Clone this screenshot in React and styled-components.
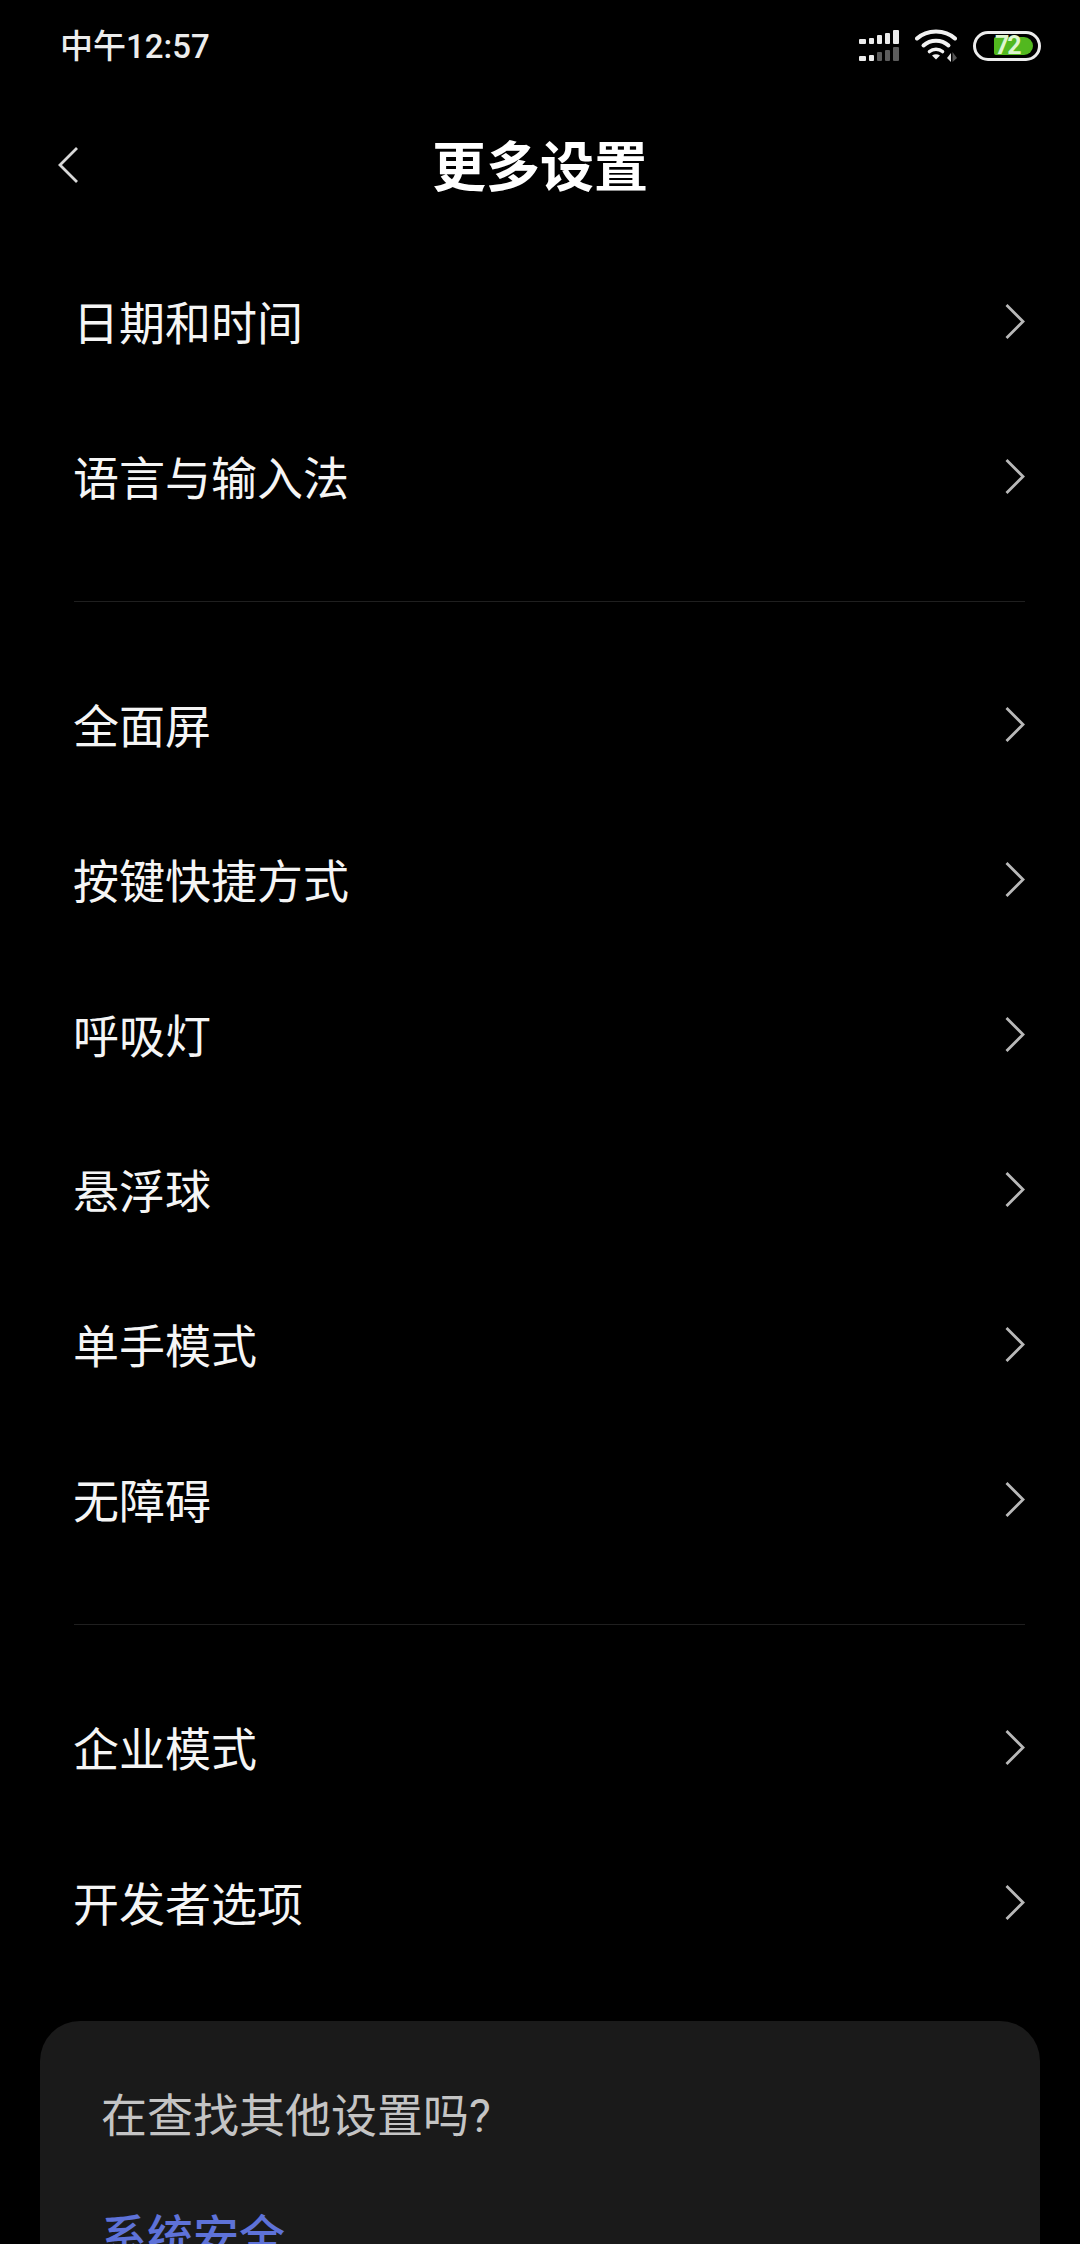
import React from 'react';
import styled, { createGlobalStyle } from 'styled-components';

const GlobalStyle = createGlobalStyle`
  html, body {
    margin: 0;
    padding: 0;
    background: #000;
  }
  body {
    font-family: "Roboto", "Noto Sans CJK SC", sans-serif;
  }
`;

const groups = [
  ['日期和时间', '语言与输入法'],
  ['全面屏', '按键快捷方式', '呼吸灯', '悬浮球', '单手模式', '无障碍'],
  ['企业模式', '开发者选项'],
];

// x, width, height of each signal bar; all sit on the same baseline
const signalBars = [
  [0, 7, 5],
  [10, 5, 6],
  [18, 5, 9],
  [26, 5, 11],
  [34, 6, 14],
];

function SignalIcon() {
  return (
    <svg width="40" height="32" viewBox="0 0 40 32">
      {[14, 31].map((bottom, row) =>
        signalBars.map(([x, w, h], i) => (
          <rect
            key={`${row}-${i}`}
            x={x}
            y={bottom - h}
            width={w}
            height={h}
            rx="1"
            fill={row === 1 && i > 1 ? '#5c5c5c' : '#ececec'}
          />
        ))
      )}
    </svg>
  );
}

function WifiIcon() {
  return (
    <svg width="42" height="34" viewBox="0 0 42 34" fill="none">
      <path d="M2 9.5C12 0 30 0 40 9.5" stroke="#f2f2f2" strokeWidth="4" strokeLinecap="round" />
      <path d="M8.5 16.5C15.5 10 26.5 10 33.5 16.5" stroke="#f2f2f2" strokeWidth="4" strokeLinecap="round" />
      <path d="M14.5 22.5C18 19.5 24 19.5 27.5 22.5" stroke="#f2f2f2" strokeWidth="3.6" strokeLinecap="round" />
      <path d="M17 26.5C19.5 24.8 22.5 24.8 25 26.5L21 30.5Z" fill="#f2f2f2" />
      <path d="M36 24V33L32 29Z" fill="#e6e6e6" />
      <path d="M37.5 23V33L42 29Z" fill="#555" />
    </svg>
  );
}

function Chevron({ left }) {
  return (
    <ChevronSvg viewBox="0 0 20 36" $left={left}>
      <path d={left ? 'M19 1L2 18L19 35' : 'M1.5 1L18 17.5L1.5 34'} />
    </ChevronSvg>
  );
}

export default function App() {
  return (
    <Screen>
      <GlobalStyle />
      <StatusBar>
        <Clock>中午12:57</Clock>
        <StatusIcons>
          <SignalIcon />
          <WifiIcon />
          <Battery>
            <BatteryFill>
              <BatteryText>72</BatteryText>
            </BatteryFill>
          </Battery>
        </StatusIcons>
      </StatusBar>
      <Header>
        <BackButton>
          <Chevron left />
        </BackButton>
        <Title>更多设置</Title>
      </Header>
      <List>
        {groups.map((items, i) => (
          <Group key={i}>
            {i > 0 && <Divider />}
            {items.map((label) => (
              <Row key={label}>
                <RowLabel>{label}</RowLabel>
                <Chevron />
              </Row>
            ))}
          </Group>
        ))}
      </List>
      <Card>
        <CardTitle>在查找其他设置吗?</CardTitle>
        <CardLink>系统安全</CardLink>
      </Card>
    </Screen>
  );
}

const Screen = styled.div`
  width: 1080px;
  height: 2244px;
  overflow: hidden;
  background: #000;
  color: #fff;
`;

const StatusBar = styled.div`
  height: 92px;
  padding: 0 39px 0 60px;
  box-sizing: border-box;
  display: flex;
  justify-content: space-between;
  align-items: center;
`;

const Clock = styled.div`
  font-size: 33px;
  font-weight: 500;
  line-height: 40px;
  margin-top: 2px;
  color: #ececec;
`;

const StatusIcons = styled.div`
  display: flex;
  align-items: center;
  gap: 16px;
`;

const Battery = styled.div`
  width: 68px;
  height: 30px;
  box-sizing: border-box;
  border: 3px solid #ececec;
  border-radius: 15px;
  padding: 3px 5px 3px 18px;
  display: flex;
`;

const BatteryFill = styled.div`
  flex: 1;
  background: #52b81f;
  border-radius: 2px 9px 9px 2px;
  display: flex;
  align-items: center;
`;

const BatteryText = styled.span`
  font-size: 25px;
  font-weight: 700;
  line-height: 18px;
  letter-spacing: -2px;
  color: #dff5d0;
  margin-left: 1px;
`;

const Header = styled.div`
  height: 148px;
  padding: 0 58px;
  display: flex;
  align-items: center;
  justify-content: center;
  position: relative;
`;

const BackButton = styled.div`
  position: absolute;
  left: 58px;
  top: 55px;
  display: flex;
`;

const Title = styled.h1`
  margin: 0 0 6px;
  font-size: 54px;
  font-weight: 700;
  color: #fff;
`;

const ChevronSvg = styled.svg`
  width: 20px;
  height: 36px;
  fill: none;
  stroke: ${(p) => (p.$left ? '#d8d8d8' : '#b8b8b8')};
  stroke-width: 2.8;
  flex-shrink: 0;
`;

const List = styled.div`
  padding: 4px 0 0;
`;

const Group = styled.div`
  display: flex;
  flex-direction: column;
`;

const Divider = styled.div`
  height: 1px;
  margin: 47px 55px 45px 74px;
  background: #1f1f1f;
`;

const Row = styled.div`
  height: 155px;
  padding: 0 55px 0 74px;
  display: flex;
  justify-content: space-between;
  align-items: center;
`;

const RowLabel = styled.div`
  font-size: 46px;
  margin: 0 0 3px -1px;
  color: #f5f5f5;
`;

const Card = styled.div`
  margin: 41px 40px 0;
  height: 400px;
  padding: 65px 61px;
  box-sizing: border-box;
  background: #1a1a1a;
  border-radius: 40px;
`;

const CardTitle = styled.div`
  font-size: 46px;
  line-height: 60px;
  color: #c4c4c4;
`;

const CardLink = styled.div`
  margin-top: 61px;
  font-size: 46px;
  line-height: 60px;
  font-weight: 500;
  color: #5e72d8;
`;
